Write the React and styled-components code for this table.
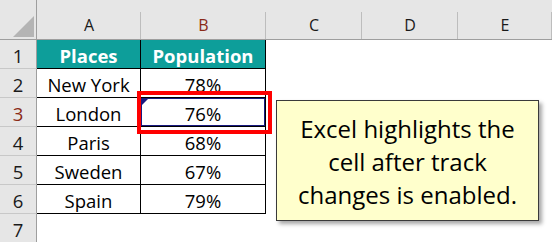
import React from "react";
import styled, { createGlobalStyle, css } from "styled-components";

const Global = createGlobalStyle`
  html, body { margin: 0; padding: 0; background: #fff; overflow: hidden; }
  body { font-family: "Open Sans", "Noto Sans", sans-serif; }
`;

const Sheet = styled.div`
  position: relative;
  width: 552px;
  height: 242px;
  overflow: hidden;
  background: #fff;
`;

const Grid = styled.div`
  display: grid;
  grid-template-columns: 37px 104px 125px 96px 96px 1fr;
  grid-template-rows: 40px repeat(7, 29px);
`;

const Corner = styled.div`
  position: relative;
  background: #e6e6e6;
  border-bottom: 1px solid #9e9e9e;
  border-right: 1px solid #9e9e9e;
  box-sizing: border-box;
`;

const CornerTriangle = styled.svg`
  position: absolute;
  left: 13px;
  top: 16px;
`;

const ColHead = styled.div`
  position: relative;
  box-sizing: border-box;
  background: #e6e6e6;
  border-bottom: 1px solid #9e9e9e;
  display: flex;
  align-items: flex-end;
  justify-content: center;
  padding-bottom: 4px;
  font-size: 16px;
  line-height: 20px;
  color: ${(p) => (p.$active ? "#8a2a17" : "#1a1a1a")};
  &::after {
    content: "";
    position: absolute;
    right: 0;
    top: 12px;
    bottom: 0;
    width: 1px;
    background: #bdbdbd;
  }
`;

const RowHead = styled.div`
  box-sizing: border-box;
  background: #e6e6e6;
  border-right: 1px solid #9e9e9e;
  border-bottom: 1px solid #c8c8c8;
  display: flex;
  align-items: center;
  justify-content: center;
  padding-top: 3px;
  font-size: 18.5px;
  color: ${(p) => (p.$active ? "#8a2a17" : "#1a1a1a")};
`;

const Cell = styled.div`
  position: relative;
  box-sizing: border-box;
  display: flex;
  align-items: center;
  justify-content: center;
  padding-top: 3px;
  font-size: 18.5px;
  color: #000;
  white-space: nowrap;
  ${(p) =>
    p.$table &&
    css`
      border-right: 1px solid #000;
      border-bottom: 1px solid #000;
    `}
  ${(p) =>
    p.$head &&
    css`
      background: #0d9e9a;
      color: #fff;
      font-weight: 700;
    `}
  ${(p) =>
    p.$active &&
    css`
      box-shadow: inset 1px 1px 0 #1a1a80, inset -1px -1px 0 #1a1a80;
      &::before {
        content: "";
        position: absolute;
        left: 1px;
        top: 1px;
        border-top: 6px solid #1a1a80;
        border-right: 6px solid transparent;
      }
    `}
`;

const RedFrame = styled.div`
  position: absolute;
  left: 137px;
  top: 91px;
  width: 135px;
  height: 43px;
  box-sizing: border-box;
  border: 4px solid #ff0000;
`;

const Callout = styled.div`
  position: absolute;
  left: 276px;
  top: 100px;
  width: 263px;
  height: 121px;
  box-sizing: border-box;
  background: #ffffcc;
  border: 1px solid #3a3a3a;
  box-shadow: 3px 3px 4px rgba(0, 0, 0, 0.35);
  display: flex;
  align-items: center;
  justify-content: center;
  text-align: center;
  font-size: 24px;
  line-height: 33px;
  padding-top: 1px;
  color: #000;
`;

const places = [
  ["New York", "78%"],
  ["London", "76%"],
  ["Paris", "68%"],
  ["Sweden", "67%"],
  ["Spain", "79%"],
];

export default function App() {
  const cols = ["A", "B", "C", "D", "E"];
  return (
    <Sheet>
      <Global />
      <Grid>
        <Corner>
          <CornerTriangle width="21" height="21" viewBox="0 0 21 21">
            <polygon points="0,21 21,21 21,0" fill="#b4b4b4" />
          </CornerTriangle>
        </Corner>
        {cols.map((c) => (
          <ColHead key={c} $active={c === "B"}>
            {c}
          </ColHead>
        ))}

        <RowHead>1</RowHead>
        <Cell $table $head>Places</Cell>
        <Cell $table $head>Population</Cell>
        <Cell />
        <Cell />
        <Cell />

        {places.map(([name, pct], i) => (
          <React.Fragment key={name}>
            <RowHead $active={i === 1}>{i + 2}</RowHead>
            <Cell $table>{name}</Cell>
            <Cell $table $active={i === 1}>{pct}</Cell>
            <Cell />
            <Cell />
            <Cell />
          </React.Fragment>
        ))}

        <RowHead>7</RowHead>
        <Cell />
        <Cell />
        <Cell />
        <Cell />
        <Cell />
      </Grid>
      <RedFrame />
      <Callout>
        Excel highlights the
        <br />
        cell after track
        <br />
        changes is enabled.
      </Callout>
    </Sheet>
  );
}
